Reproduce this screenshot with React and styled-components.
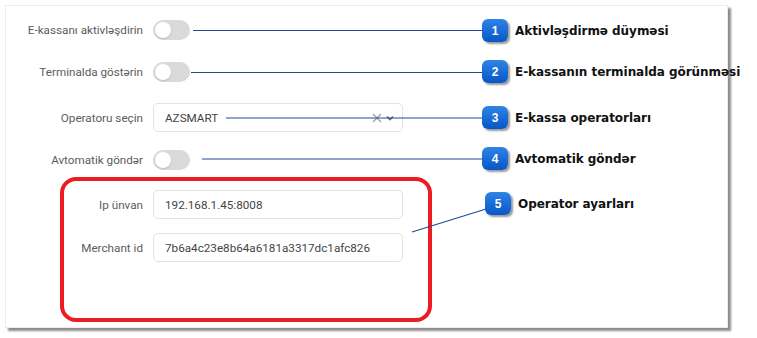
import React from "react";
import styled, { createGlobalStyle } from "styled-components";

const Global = createGlobalStyle`
  html, body {
    margin: 0;
    padding: 0;
    background: #ffffff;
  }
`

const Stage = styled.div`
  position: relative;
  width: 757px;
  height: 338px;
  overflow: hidden;
  background: #fff;
`

const Panel = styled.div`
  box-sizing: border-box;
  margin: 5px 0 0 5px;
  width: 723px;
  height: 323px;
  padding-top: 14px;
  background: #fff;
  border: 1px solid #ececec;
  box-shadow: 3px 3px 2px rgba(0, 0, 0, 0.45);
  font-family: Roboto, "Liberation Sans", sans-serif;
`

const Row = styled.div`
  display: flex;
  align-items: center;
  gap: 10px;
  height: ${p => p.$h}px;
  margin-top: ${p => p.$mt}px;
`

const Label = styled.div`
  width: 137px;
  text-align: right;
  font-size: 11.7px;
  color: #5c5c5c;
  white-space: nowrap;
`

const Toggle = styled.div`
  box-sizing: border-box;
  width: 37px;
  height: 20px;
  border-radius: 10px;
  background: #dadada;
  padding: 2px;
  display: flex;
  align-items: center;
  &::after {
    content: "";
    width: 16px;
    height: 16px;
    border-radius: 50%;
    background: #fff;
    box-shadow: 0 1px 2px rgba(0, 0, 0, 0.15);
  }
`

const Field = styled.div`
  box-sizing: border-box;
  width: 250px;
  height: 29px;
  border: 1px solid #e3e3e3;
  border-radius: 5px;
  display: flex;
  align-items: center;
  padding: 0 8px 0 11px;
  font-size: 11.7px;
  color: #444;
`

const Value = styled.span`
  flex: 1;
`

const SelectIcons = styled.div`
  display: flex;
  align-items: center;
  gap: 4px;
`

const Overlay = styled.svg`
  position: absolute;
  left: 0;
  top: 0;
  pointer-events: none;
`

const RedFrame = styled.div`
  position: absolute;
  left: 60px;
  top: 177px;
  width: 372px;
  height: 145px;
  box-sizing: border-box;
  border: 4px solid #ec1c24;
  border-radius: 16px;
`

const Callout = styled.div`
  position: absolute;
  left: ${p => p.$x}px;
  top: ${p => p.$y}px;
  display: flex;
  align-items: center;
  gap: 7px;
  height: 23px;
`

const Badge = styled.div`
  width: 26px;
  height: 23px;
  border-radius: 6px;
  background: linear-gradient(#2f84e6, #0757c6);
  box-shadow: 2px 2px 2px rgba(0, 0, 0, 0.4);
  color: #fff;
  font-family: "Liberation Sans", Arial, sans-serif;
  font-weight: bold;
  font-size: 12px;
  display: flex;
  align-items: center;
  justify-content: center;
`

const CalloutText = styled.span`
  font-family: "DejaVu Sans", Verdana, sans-serif;
  font-weight: bold;
  font-size: 12px;
  letter-spacing: -0.05px;
  color: #111;
  white-space: nowrap;
`

const callouts = [
  { n: 1, x: 482, y: 19, text: "Aktivləşdirmə düyməsi" },
  { n: 2, x: 482, y: 60, text: "E-kassanın terminalda görünməsi" },
  { n: 3, x: 482, y: 106, text: "E-kassa operatorları" },
  { n: 4, x: 482, y: 147, text: "Avtomatik göndər" },
  { n: 5, x: 485, y: 192, text: "Operator ayarları" },
]

const App = () => {
  return (
    <Stage>
      <Global />
      <Panel>
        <Row $h={20} $mt={0}>
          <Label>E-kassanı aktivləşdirin</Label>
          <Toggle />
        </Row>
        <Row $h={20} $mt={22}>
          <Label>Terminalda göstərin</Label>
          <Toggle />
        </Row>
        <Row $h={29} $mt={21}>
          <Label>Operatoru seçin</Label>
          <Field>
            <Value>AZSMART</Value>
            <SelectIcons>
              <svg width="10" height="10" viewBox="0 0 10 10">
                <path d="M1 1 L9 9 M9 1 L1 9" stroke="#9a9a9a" strokeWidth="1.1" />
              </svg>
              <svg width="8" height="8" viewBox="0 0 8 8">
                <path d="M1 2.5 L4 5.5 L7 2.5" stroke="#6b6b6b" strokeWidth="1.6" fill="none" />
              </svg>
            </SelectIcons>
          </Field>
        </Row>
        <Row $h={20} $mt={18}>
          <Label>Avtomatik göndər</Label>
          <Toggle />
        </Row>
        <Row $h={29} $mt={20}>
          <Label>Ip ünvan</Label>
          <Field><Value>192.168.1.45:8008</Value></Field>
        </Row>
        <Row $h={29} $mt={14}>
          <Label>Merchant id</Label>
          <Field><Value>7b6a4c23e8b64a6181a3317dc1afc826</Value></Field>
        </Row>
      </Panel>

      <RedFrame />

      <Overlay width="757" height="338">
        <g stroke="#1d4f8f" strokeWidth="1.2">
          <line x1="193" y1="30.5" x2="483" y2="30.5" />
          <line x1="191" y1="72.5" x2="483" y2="72.5" />
          <line x1="226" y1="118" x2="483" y2="118" />
          <line x1="202" y1="159" x2="483" y2="159" />
          <line x1="412" y1="232" x2="486" y2="209" />
        </g>
      </Overlay>

      {callouts.map(c => (
        <Callout key={c.n} $x={c.x} $y={c.y}>
          <Badge>{c.n}</Badge>
          <CalloutText>{c.text}</CalloutText>
        </Callout>
      ))}
    </Stage>
  )
}

export default App;
